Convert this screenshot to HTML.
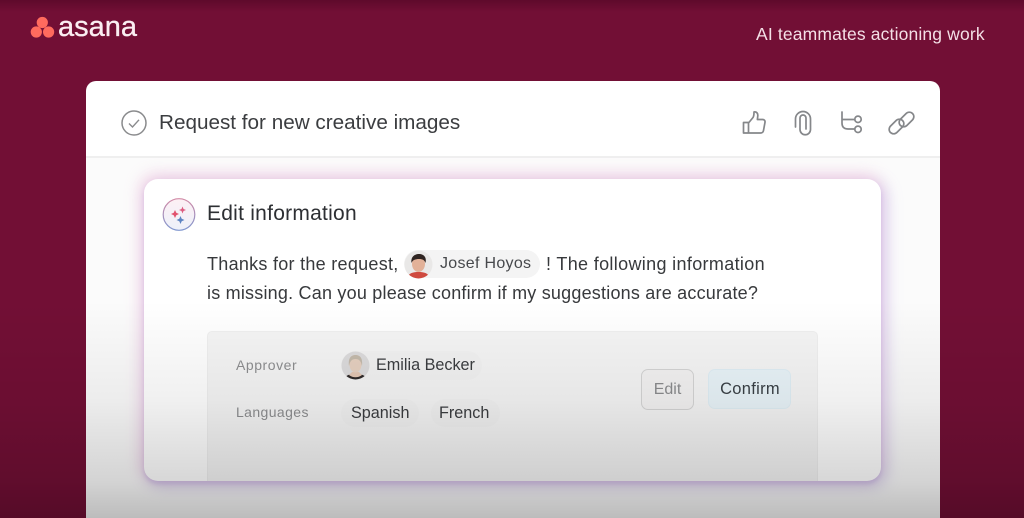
<!DOCTYPE html>
<html><head><meta charset="utf-8"><style>
html,body{margin:0;padding:0;width:1024px;height:518px;overflow:hidden;background:#720f35}
#w{position:relative;width:1024px;height:518px;overflow:hidden;background:#720f35;font-family:"Liberation Sans",sans-serif}
.a{position:absolute;white-space:nowrap}
.t{line-height:20px}
</style></head><body><div id="w">
<div class="a" style="left:0;top:0;width:1024px;height:12px;background:linear-gradient(#5e0a2b,#720f35)"></div>
<div class="a" style="left:86px;top:81px;width:854px;height:437px;background:#fff;border-radius:10px 10px 0 0;overflow:hidden">
  <div class="a" style="left:0;top:75px;width:854px;height:362px;background:#fbfbfb;border-top:2px solid #efefef;box-sizing:border-box"></div>
</div>
<div class="a" style="left:144px;top:179px;width:737px;height:302px;background:#fff;border-radius:14px;box-shadow:-2px -3px 15px 2px rgba(236,175,208,.48),4px 4px 15px 2px rgba(170,155,225,.38),0 3px 5px rgba(150,125,215,.32)"></div>
<div class="a" style="left:207px;top:331px;width:611px;height:170px;background:#f5f5f5;border:1px solid #efefef;border-radius:5px;box-sizing:border-box;clip-path:inset(0 0 20px 0)"></div>

<svg class="a" style="left:30px;top:16px" width="25" height="23" viewBox="0 0 25 23"><circle cx="12.300" cy="6.500" r="5.600" fill="#ff6b5e"/><circle cx="6.300" cy="16" r="5.600" fill="#ff6b5e"/><circle cx="18.600" cy="16" r="5.600" fill="#ff6b5e"/></svg>
<div class="a" style="left:58px;top:12px;font-size:29px;line-height:30px;color:#fbeef2;-webkit-text-stroke:.3px #fbeef2">asana</div>
<div class="a t" style="left:756px;top:24px;font-size:17.500px;color:#f4dfe6;letter-spacing:.15px">AI teammates actioning work</div>

<svg class="a" style="left:121px;top:110px" width="26" height="26" viewBox="0 0 26 26" fill="none" stroke="#8a8b8d" stroke-width="1.500"><circle cx="13" cy="13" r="12"/><path d="M8 13.500l3.500 3.500L18 9.800" stroke-width="1.400"/></svg>
<div class="a" style="left:159px;top:110px;font-size:20.700px;line-height:26px;color:#3b3d40">Request for new creative images</div>

<svg class="a" style="left:740px;top:108px" width="180" height="30" viewBox="0 0 180 30" fill="none" stroke="#85878a" stroke-width="1.700" stroke-linecap="round" stroke-linejoin="round">
<path d="M3.500 14.500h5v10.500h-5zM8.500 15l4.500-5.500c.8-1.100 1-2.300 1-5.500 2.500-.5 4 1.300 3.800 3.700l-.4 3.800h5.300c1.500 0 2.600 1.300 2.300 2.800l-1.500 8.200c-.2 1.400-1.300 2.500-2.800 2.500h-12.200"/>
<path d="M55.500 19V11a7.500 7.500 0 0 1 15 0V21.500a5.250 5.250 0 0 1-10.500 0V10a3 3 0 0 1 6 0V21"/>
<path d="M102 4V15c0 4 2 6 6 6h6.800M102 11.500h12.800"/>
<circle cx="118" cy="11.300" r="3.200"/><circle cx="118" cy="21.300" r="3.200"/>
<rect x="158" y="7" width="17" height="9" rx="4.500" transform="rotate(-45 166.500 11.500)"/>
<rect x="148" y="14" width="17" height="9" rx="4.500" transform="rotate(-45 156.500 18.500)"/>
</svg>

<svg class="a" style="left:162px;top:197px" width="34" height="35" viewBox="0 0 34 35"><defs><linearGradient id="g" x1="0" y1="0" x2="0" y2="1"><stop offset="0" stop-color="#fdf0f4"/><stop offset="1" stop-color="#edf1fa"/></linearGradient><linearGradient id="s" x1="0" y1="0" x2="0" y2="1"><stop offset="0" stop-color="#d28aa6"/><stop offset="1" stop-color="#7f96cf"/></linearGradient></defs><circle cx="17" cy="17.500" r="15.800" fill="url(#g)" stroke="url(#s)" stroke-width="1.200"/>
<path d="M13 13l1.300 2.700 2.700 1.300-2.700 1.300-1.300 2.700-1.300-2.700-2.700-1.300 2.700-1.300z" fill="#e2536f"/><path d="M20.500 9.500l1 2.500 2.500 1-2.500 1-1 2.500-1-2.500-2.500-1 2.500-1z" fill="#dd5c80"/><path d="M18.500 19l1.200 2.800 2.800 1.200-2.800 1.200-1.200 2.800-1.200-2.800-2.800-1.200 2.800-1.200z" fill="#5d84c2"/></svg>
<div class="a" style="left:207px;top:201px;font-size:21px;line-height:25px;color:#2d2f33;letter-spacing:.25px">Edit information</div>

<div class="a" style="left:207px;top:254px;font-size:18px;line-height:20px;color:#37393c;letter-spacing:.28px">Thanks for the request,</div>
<div class="a" style="left:404px;top:250px;width:136px;height:28px;border-radius:14px;background:#f4f4f4"></div>
<svg class="a" style="left:404px;top:250px" width="29" height="29" viewBox="0 0 29 29"><defs><clipPath id="c1"><circle cx="14.500" cy="14.500" r="14"/></clipPath></defs><g clip-path="url(#c1)"><rect width="29" height="29" fill="#e9e8e7"/><path d="M3 29c1-6 6-7 11.500-7S25 23 26 29z" fill="#cf4a3f"/><ellipse cx="14.500" cy="14" rx="6.500" ry="8" fill="#e2b198"/><path d="M7.500 13c-1-6 3-9 7.500-9s8 3 6.500 9c-1-3-3-4-6.500-4s-6.500 1-7.500 4z" fill="#2f2522"/></g></svg>
<div class="a" style="left:440px;top:254px;font-size:16px;line-height:20px;color:#47494c;letter-spacing:.3px">Josef Hoyos</div>
<div class="a" style="left:546px;top:254px;font-size:18px;line-height:20px;color:#37393c;letter-spacing:.34px">! The following information</div>
<div class="a" style="left:207px;top:283px;font-size:18px;line-height:20px;color:#37393c;letter-spacing:.21px">is missing. Can you please confirm if my suggestions are accurate?</div>

<div class="a" style="left:236px;top:355px;font-size:14px;line-height:20px;color:#8d8e90;letter-spacing:.55px">Approver</div>
<div class="a" style="left:236px;top:402px;font-size:14px;line-height:20px;color:#8d8e90;letter-spacing:.4px">Languages</div>
<div class="a" style="left:341px;top:351px;width:141px;height:29px;border-radius:15px;background:#f2f2f2"></div>
<svg class="a" style="left:341px;top:351px" width="29" height="29" viewBox="0 0 29 29"><defs><clipPath id="c2"><circle cx="14.500" cy="14.500" r="14"/></clipPath></defs><g clip-path="url(#c2)"><rect width="29" height="29" fill="#dcdbdc"/><path d="M3 29c1-5 6-6 11.500-6S25 24 26 29z" fill="#2f2a2a"/><path d="M8 24c4 3 9 3 13 0l-3-3h-7z" fill="#e4c7b4"/><ellipse cx="14.500" cy="13.500" rx="6" ry="8" fill="#e6d0c0"/><path d="M8 15C7 7 10 4 14.500 4S22 7 21 15c-1-5-3-7-6.500-7S9 10 8 15z" fill="#c4baac"/></g></svg>
<div class="a" style="left:376px;top:355px;font-size:16.200px;line-height:20px;color:#3b3d40">Emilia Becker</div>
<div class="a" style="left:341px;top:399px;width:78px;height:28px;border-radius:14px;background:#f2f2f2"></div>
<div class="a" style="left:431px;top:399px;width:69px;height:28px;border-radius:14px;background:#f2f2f2"></div>
<div class="a" style="left:351px;top:403px;font-size:16.200px;line-height:20px;color:#3b3d40">Spanish</div>
<div class="a" style="left:439px;top:403px;font-size:16.200px;line-height:20px;color:#3b3d40">French</div>

<div class="a" style="left:641px;top:369px;width:53px;height:41px;border:1px solid #d5d5d5;border-radius:7px;background:#f3f2f2;box-sizing:border-box;text-align:center;font-size:16px;line-height:39px;color:#8b8c8e">Edit</div>
<div class="a" style="left:708px;top:369px;width:83px;height:40px;border-radius:7px;background:#e9f4f9;border:1px solid #e0eff6;box-sizing:border-box;text-align:center;font-size:16.500px;line-height:38px;color:#3a4046;letter-spacing:.3px;padding-left:1px">Confirm</div>

<div class="a" style="left:0;top:300px;width:1024px;height:218px;background:linear-gradient(rgba(0,0,0,0),rgba(0,0,0,.06) 46%,rgba(0,0,0,.155) 83%,rgba(0,0,0,.25))"></div>
</div></body></html>
